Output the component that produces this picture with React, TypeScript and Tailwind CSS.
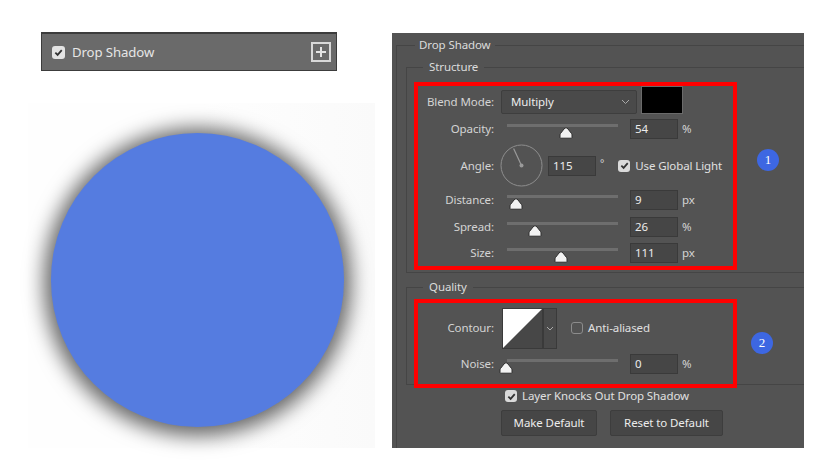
import React from "react";

const Check = ({ on = true }: { on?: boolean }) =>
  on ? (
    <span className="w-[12px] h-[12px] rounded-[3px] bg-[#dadada] flex items-center justify-center shrink-0">
      <svg width="9" height="9" viewBox="0 0 10 10">
        <path d="M1.5 5.2 L4 7.6 L8.6 2.4" fill="none" stroke="#333" strokeWidth="2" />
      </svg>
    </span>
  ) : (
    <span className="block w-[12px] h-[12px] rounded-[3px] border border-[#8c8c8c] shrink-0" />
  );

const Slider = ({ at }: { at: number }) => (
  <div className="relative w-[123px] h-[20px] shrink-0">
    <div className="absolute left-[6px] right-[6px] top-[5px] h-[3px] bg-[#6e6e6e]" />
    <svg
      className="absolute top-[8px]"
      style={{ left: at - 7 }}
      width="14"
      height="12"
      viewBox="0 0 14 12"
    >
      <path
        d="M7 0.8 Q8 0.8 9 2 L12.5 6.5 Q13 7 13 8 L13 10.5 Q13 11.2 12.3 11.2 L1.7 11.2 Q1 11.2 1 10.5 L1 8 Q1 7 1.5 6.5 L5 2 Q6 0.8 7 0.8 Z"
        fill="#f2f2f2"
        stroke="#2e2e2e"
        strokeWidth="1"
      />
    </svg>
  </div>
);

const Field = ({ v, w = "w-[48px]" }: { v: string; w?: string }) => (
  <div className={`${w} h-[20px] bg-[#464646] border border-[#3a3a3a] text-[#ececec] pl-[4px] flex items-center shrink-0`}>
    {v}
  </div>
);

const Label = ({ t }: { t: string }) => (
  <div className="w-[76px] text-right text-[#d4d4d4] shrink-0">{t}</div>
);

const SliderRow = ({ t, at, v, unit, mt }: { t: string; at: number; v: string; unit: string; mt: string }) => (
  <div className={`flex items-center h-[20px] ${mt}`}>
    <Label t={t} />
    <div className="w-[7px]" />
    <Slider at={at} />
    <div className="ml-[6px]">
      <Field v={v} />
    </div>
    <span className="ml-[4px] text-[#d4d4d4]">{unit}</span>
  </div>
);

const Badge = ({ n }: { n: string }) => (
  <div className="w-[22px] h-[22px] rounded-full bg-[#3d67e2] text-white flex items-center justify-center font-['Liberation_Serif',serif] text-[13px]">
    {n}
  </div>
);

export default function App() {
  return (
    <div className="w-[833px] h-[476px] bg-white flex overflow-hidden font-['Noto_Sans',sans-serif] text-[11.5px] tracking-[-0.1px] leading-[16px]">
      {/* left: layer row + preview */}
      <div className="w-[392px] shrink-0">
        <div className="ml-[41px] mt-[32px] w-[296px] h-[39px] bg-[#6a6a6a] border border-[#3c3c3c] border-t-2 flex items-center pl-[10px] pr-[5px]">
          <span className="w-[13px] h-[13px] rounded-[3px] bg-[#e4e4e4] flex items-center justify-center">
            <svg width="9" height="9" viewBox="0 0 10 10">
              <path d="M1.5 5.2 L4 7.6 L8.6 2.4" fill="none" stroke="#333" strokeWidth="2" />
            </svg>
          </span>
          <span className="ml-[7px] text-[13.2px] text-[#e6e6e6]">Drop Shadow</span>
          <span className="ml-auto w-[20px] h-[20px] border-2 border-[#d8d8d8] flex items-center justify-center">
            <svg width="12" height="12" viewBox="0 0 12 12">
              <path d="M6 1 V11 M1 6 H11" stroke="#e4e4e4" strokeWidth="2" />
            </svg>
          </span>
        </div>
        <div className="ml-[28px] mt-[32px] w-[347px] h-[345px] bg-gradient-to-r from-[#fefefe] via-[#fefefe] to-[#fafafa] pt-[30px] pl-[23px]">
          <div className="w-[293px] h-[294px] rounded-full bg-[#557ce0] shadow-[0_2px_20px_7px_rgba(0,0,0,0.6)]" />
        </div>
      </div>

      {/* right: layer style panel */}
      <div className="mt-[33px] w-[412px] h-[415px] bg-[#535353] overflow-hidden text-[#d8d8d8]">
        <fieldset className="ml-[4px] mt-[4px] w-[440px] h-[420px] border-l border-t border-[#454545]">
          <legend className="ml-[18px] px-[4px] text-[#dcdcdc]">Drop Shadow</legend>

          <fieldset className="ml-[9px] mt-[6px] w-[440px] border-l border-t border-b border-[#454545]">
            <legend className="ml-[16px] px-[6px] text-[#dcdcdc]">Structure</legend>
            <div className="flex items-start">
              <div className="ml-[7px] mt-[7px] mb-[2px] w-[323px] h-[188px] border-4 border-[#ff0000]">
                {/* blend mode */}
                <div className="flex items-end h-[28px]">
                  <div className="h-[24px] flex items-center">
                    <Label t="Blend Mode:" />
                  </div>
                  <div className="ml-[7px] w-[136px] h-[24px] bg-[#4a4a4a] border border-[#3e3e3e] rounded-[2px] flex items-center pl-[9px] pr-[6px] text-[#ececec]">
                    Multiply
                    <svg className="ml-auto" width="9" height="6" viewBox="0 0 9 6">
                      <path d="M1 1 L4.5 4.5 L8 1" fill="none" stroke="#aaa" strokeWidth="1" />
                    </svg>
                  </div>
                  <div className="ml-[4px] w-[42px] h-[28px] bg-black border border-[#6a6a6a]" />
                </div>
                <SliderRow t="Opacity:" at={65} v="54" unit="%" mt="mt-[5px]" />
                {/* angle */}
                <div className="flex items-center h-[43px] mt-[5px]">
                  <Label t="Angle:" />
                  <svg className="ml-[6px] shrink-0" width="43" height="43" viewBox="0 0 43 43">
                    <circle cx="21.5" cy="21.5" r="20.5" fill="none" stroke="#8e8e8e" strokeWidth="1" />
                    <line x1="21.5" y1="21.5" x2="13.6" y2="4.6" stroke="#9a9a9a" strokeWidth="1.2" />
                    <circle cx="21.5" cy="21.5" r="2" fill="#9a9a9a" />
                  </svg>
                  <div className="ml-[5px]">
                    <Field v="115" w="w-[48px]" />
                  </div>
                  <span className="ml-[4px] text-[10px] leading-[10px] -mt-[6px] text-[#d4d4d4]">°</span>
                  <span className="ml-[14px]">
                    <Check />
                  </span>
                  <span className="ml-[5px] text-[#e0e0e0]">Use Global Light</span>
                </div>
                <SliderRow t="Distance:" at={15} v="9" unit="px" mt="mt-[3px]" />
                <SliderRow t="Spread:" at={34} v="26" unit="%" mt="mt-[7px]" />
                <SliderRow t="Size:" at={60} v="111" unit="px" mt="mt-[6px]" />
              </div>
              <div className="ml-[20px] mt-[74px]">
                <Badge n="1" />
              </div>
            </div>
          </fieldset>

          <fieldset className="ml-[9px] mt-[6px] w-[440px] h-[106px] border-l border-t border-b border-[#454545]">
            <legend className="ml-[16px] px-[6px] text-[#dcdcdc]">Quality</legend>
            <div className="flex items-start">
              <div className="ml-[7px] mt-[4px] w-[323px] h-[89px] border-4 border-[#ff0000]">
                {/* contour */}
                <div className="flex items-center h-[40px] mt-[5px]">
                  <Label t="Contour:" />
                  <div className="ml-[8px] flex">
                    <svg width="41" height="41" viewBox="0 0 41 41" className="border border-[#3a3a3a]">
                      <rect x="0" y="0" width="41" height="41" fill="#474747" />
                      <path d="M0 0 H41 L0 41 Z" fill="#ffffff" />
                    </svg>
                    <div className="w-[14px] h-[41px] bg-[#4a4a4a] border border-[#3a3a3a] flex items-center justify-center">
                      <svg width="8" height="5" viewBox="0 0 8 5">
                        <path d="M1 1 L4 4 L7 1" fill="none" stroke="#aaa" strokeWidth="1" />
                      </svg>
                    </div>
                  </div>
                  <span className="ml-[14px]">
                    <Check on={false} />
                  </span>
                  <span className="ml-[5px] text-[#e0e0e0]">Anti-aliased</span>
                </div>
                <SliderRow t="Noise:" at={5} v="0" unit="%" mt="mt-[6px]" />
              </div>
              <div className="ml-[14px] mt-[37px]">
                <Badge n="2" />
              </div>
            </div>
          </fieldset>

          <div className="ml-[108px] mt-[3px] h-[16px] flex items-center">
            <Check />
            <span className="ml-[5px] text-[#e0e0e0]">Layer Knocks Out Drop Shadow</span>
          </div>
          <div className="ml-[104px] mt-[6px] flex gap-[13px]">
            <div className="w-[96px] h-[26px] bg-[#464646] border border-[#3d3d3d] rounded-[2px] flex items-center justify-center text-[#ececec]">
              Make Default
            </div>
            <div className="w-[113px] h-[26px] bg-[#464646] border border-[#3d3d3d] rounded-[2px] flex items-center justify-center text-[#ececec]">
              Reset to Default
            </div>
          </div>
        </fieldset>
      </div>
    </div>
  );
}
